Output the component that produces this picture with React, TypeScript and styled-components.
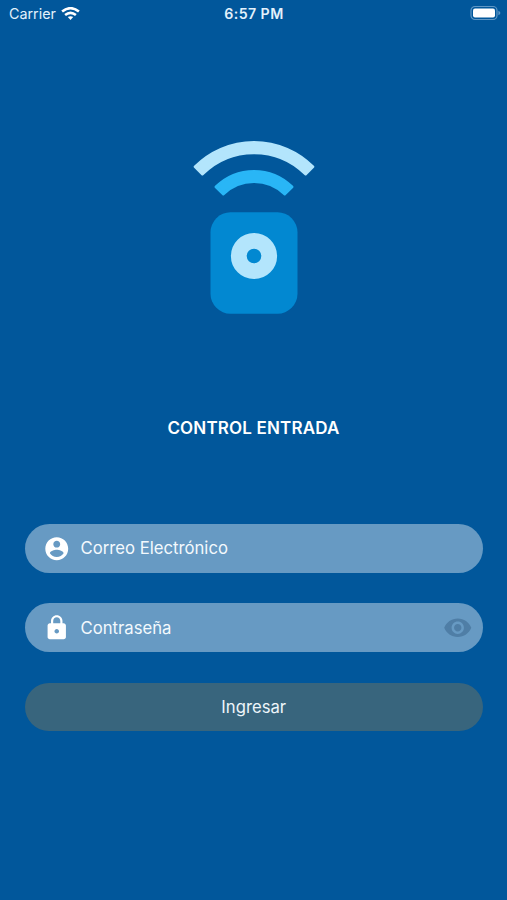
import React from 'react';
import styled, { createGlobalStyle } from 'styled-components';
import { MdLock, MdVisibility } from 'react-icons/md';

const GlobalStyle = createGlobalStyle`
  * { box-sizing: border-box; }
  body { margin: 0; background: #01579b; }
`;

const Screen = styled.main`
  display: flex;
  flex-direction: column;
  height: 900px;
  background: #01579b;
  color: #fff;
  font-family: Inter, 'Liberation Sans', sans-serif;
`;

const StatusBar = styled.header`
  display: grid;
  grid-template-columns: 1fr auto 1fr;
  align-items: center;
  height: 28px;
  padding: 0 6px 0 9px;
  color: #e3f1fb;
  font-size: 14.3px;
  line-height: 28px;
`;

const Carrier = styled.div`
  display: flex;
  align-items: center;
  gap: 5px;
`;

const Clock = styled.time`
  font-weight: 600;
  letter-spacing: 0.4px;
  font-size: 14.2px;
  margin-right: 2px;
`;

const Battery = styled.svg`
  justify-self: end;
  margin-top: -2px;
`;

const Logo = styled.svg`
  display: block;
  align-self: center;
  margin: 107px 0 0 1px;
`;

const Title = styled.h1`
  margin: 101px 0 0;
  font-size: 17px;
  font-weight: 600;
  letter-spacing: 0.17px;
  line-height: 24px;
  text-align: center;
`;

const Form = styled.form`
  display: flex;
  flex-direction: column;
  gap: 30.5px;
  margin-top: 84px;
  padding: 0 24.5px 0 25px;
`;

const Field = styled.label`
  display: flex;
  align-items: center;
  height: 48.8px;
  padding: 0 10.5px 0 18px;
  border-radius: 25px;
  background: #679ac3;
`;

const Input = styled.input`
  flex: 1;
  min-width: 0;
  margin-left: 10px;
  padding: 0;
  border: 0;
  outline: 0;
  background: transparent;
  color: #f3f9fd;
  font: 400 16.7px Inter, 'Liberation Sans', sans-serif;
  &::placeholder { color: #f3f9fd; opacity: 1; }
`;

const Reveal = styled.button`
  display: flex;
  padding: 0;
  border: 0;
  background: none;
  color: #4f7ea6;
`;

const Submit = styled.button`
  height: 48.8px;
  border: 0;
  border-radius: 25px;
  background: #38657d;
  color: #edf5fa;
  font: 400 16.7px Inter, 'Liberation Sans', sans-serif;
`;

export default function App() {
  return (
    <Screen>
      <GlobalStyle />
      <StatusBar>
        <Carrier>
          <span>Carrier</span>
          <svg width="19" height="15" viewBox="0 0 19 15" fill="none" stroke="#fff" strokeWidth="2.6">
            <path d="M1.1 4.6Q9.5-2.2 17.9 4.6" />
            <path d="M4.1 8Q9.5 3.6 14.9 8" />
            <path d="M6.8 10.1Q9.5 8.3 12.2 10.1L9.5 13Z" fill="#fff" stroke="none" />
          </svg>
        </Carrier>
        <Clock>6:57 PM</Clock>
        <Battery width="31" height="16" viewBox="0 0 31 16">
          <rect x="1" y="1.5" width="26" height="13" rx="4" fill="none" stroke="#5f97c5" strokeWidth="1.2" />
          <rect x="3" y="3.5" width="22" height="9" rx="2" fill="#fff" />
          <path d="M28.4 5.8Q30.4 6.5 30.4 8T28.4 10.2Z" fill="#5f97c5" />
        </Battery>
      </StatusBar>
      <Logo width="124" height="180" viewBox="192 135 124 180">
        <path d="M195.2 166.8A83.1 83.1 0 0 1 312.8 166.8L305.6 174A73.1 73.1 0 0 0 202.4 174Z" fill="#b3e5fc" stroke="#b3e5fc" strokeWidth="3" strokeLinejoin="round" />
        <path d="M216.1 186.9A54.1 54.1 0 0 1 291.9 186.9L284.7 193.9A44.1 44.1 0 0 0 223.3 193.9Z" fill="#29b6f6" stroke="#29b6f6" strokeWidth="3" strokeLinejoin="round" />
        <rect x="210.5" y="212.3" width="87" height="101.4" rx="20" fill="#0288d1" />
        <circle cx="254" cy="256" r="15.2" fill="none" stroke="#b3e5fc" strokeWidth="15.8" />
      </Logo>
      <Title>CONTROL ENTRADA</Title>
      <Form onSubmit={(e) => e.preventDefault()}>
        <Field>
          <svg width="27.5" height="27.5" viewBox="0 0 24 24" fill="currentColor">
            <path d="M12 2C6.48 2 2 6.48 2 12s4.48 10 10 10 10-4.48 10-10S17.52 2 12 2zm0 3c1.66 0 3 1.34 3 3s-1.34 3-3 3-3-1.34-3-3 1.34-3 3-3zm0 14.2c-2.5 0-4.71-1.28-6-3.22.03-1.99 4-3.08 6-3.08 1.99 0 5.97 1.09 6 3.08-1.29 1.94-3.5 3.22-6 3.22z" />
          </svg>
          <Input type="email" placeholder="Correo Electrónico" />
        </Field>
        <Field>
          <MdLock size={27.5} />
          <Input type="password" placeholder="Contraseña" />
          <Reveal type="button" aria-label="Mostrar contraseña">
            <MdVisibility size={29.5} />
          </Reveal>
        </Field>
        <Submit>Ingresar</Submit>
      </Form>
    </Screen>
  );
}
